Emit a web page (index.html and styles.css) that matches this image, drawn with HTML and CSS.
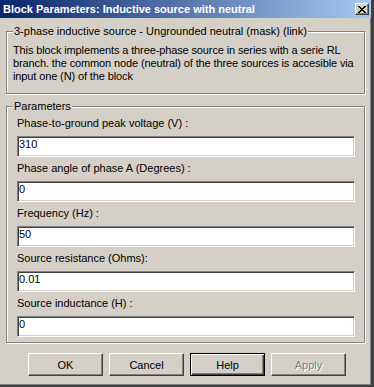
FILE: index.html
```html
<!DOCTYPE html>
<html lang="en">
<head>
    <meta charset="UTF-8">
    <title>Block Parameters: Inductive source with neutral</title>
    <link rel="stylesheet" href="styles.css">
</head>
<body>

<div class="window">
    <div class="titlebar">
        <span class="title">Block Parameters: Inductive source with neutral</span>
        <span class="close-btn">
            <svg width="8" height="7" viewBox="0 0 8 7">
                <path d="M0 0h2v1h1v1h2v-1h1v-1h2v1h-1v1h-1v1h-1v1h1v1h1v1h1v1h-2v-1h-1v-1h-2v1h-1v1h-2v-1h1v-1h1v-1h1v-1h-1v-1h-1v-1h-1z" fill="#000"/>
            </svg>
        </span>
    </div>

    <div class="client">
        <fieldset class="group desc">
            <legend>3-phase inductive source - Ungrounded neutral (mask) (link)</legend>
            <p class="desc-text">This block implements a three-phase source in series with a serie RL
branch. the common node (neutral) of the three sources is accesible via
input one (N) of the block</p>
        </fieldset>

        <fieldset class="group params">
            <legend>Parameters</legend>
            <label for="p1">Phase-to-ground peak voltage (V) :</label>
            <input class="field" id="p1" type="text" value="310">
            <label for="p2">Phase angle of phase A (Degrees) :</label>
            <input class="field" id="p2" type="text" value="0">
            <label for="p3">Frequency (Hz) :</label>
            <input class="field" id="p3" type="text" value="50">
            <label for="p4">Source resistance (Ohms):</label>
            <input class="field" id="p4" type="text" value="0.01">
            <label for="p5">Source inductance (H) :</label>
            <input class="field last" id="p5" type="text" value="0">
        </fieldset>

        <div class="buttons">
            <button class="btn">OK</button>
            <button class="btn">Cancel</button>
            <button class="btn default">Help</button>
            <button class="btn" disabled>Apply</button>
        </div>
    </div>
</div>

</body>
</html>
```

FILE: styles.css
```css
body {
    margin: 0;
    background-color: #d4d0c8;
    font-family: "Liberation Sans", Arial, sans-serif;
    font-size: 11px;
    color: #000;
}
.window {
    width: 374px;
    height: 387px;
    box-sizing: border-box;
    border-right: 3px solid #404040;
    border-bottom: 2px solid #404040;
    box-shadow: inset -1px -1px 0 #808080;
    display: flex;
    flex-direction: column;
}
.titlebar {
    height: 18px;
    display: flex;
    align-items: center;
    justify-content: space-between;
    padding: 0 2px 0 3px;
    background: linear-gradient(to right, #0a246a, #a6caf0);
}
.title {
    color: #fff;
    font-weight: bold;
    font-size: 11px;
}
.close-btn {
    width: 14px;
    height: 12px;
    box-sizing: border-box;
    display: flex;
    align-items: center;
    justify-content: center;
    background-color: #d4d0c8;
    border: 1px solid;
    border-color: #fff #404040 #404040 #fff;
    box-shadow: inset -1px -1px 0 #808080;
}
.client {
    padding: 7px 6px 0 6px;
}
.group {
    min-width: 0;
    margin: 0;
    padding: 6px 1px 10px 6px;
    border: 1px solid #808080;
    box-shadow: 1px 1px 0 #fff, inset 1px 1px 0 #fff;
}
.group legend {
    padding: 0 1px;
    line-height: 13px;
    background-color: #d4d0c8;
}
.desc-text {
    margin: 0;
    line-height: 13px;
    letter-spacing: -0.12px;
    white-space: pre;
}
.params {
    margin-top: 6px;
    padding: 4px 6px 5px 6px;
}
.params label {
    display: block;
    margin-left: 4px;
    line-height: 13px;
    margin-bottom: 6px;
}
.field {
    display: block;
    box-sizing: border-box;
    width: 338px;
    height: 21px;
    margin: 0 0 5px 4px;
    padding: 0 1px 6px 1px;
    border: 1px solid;
    border-color: #808080 #fff #fff #808080;
    box-shadow: inset 1px 1px 0 #404040, inset -1px -1px 0 #d4d0c8;
    background-color: #fff;
    font: inherit;
    color: #000;
    outline: none;
}
.field.last {
    margin-bottom: 0;
}
.buttons {
    display: flex;
    gap: 6px;
    margin-top: 10px;
    padding-left: 22px;
}
.btn {
    width: 75px;
    height: 23px;
    box-sizing: border-box;
    padding: 0;
    background-color: #d4d0c8;
    border: 1px solid;
    border-color: #fff #404040 #404040 #fff;
    box-shadow: inset -1px -1px 0 #808080;
    font: inherit;
    color: #000;
}
.btn.default {
    border-color: #000;
    box-shadow: inset 1px 1px 0 #fff, inset -1px -1px 0 #404040, inset -2px -2px 0 #808080;
}
.btn:disabled {
    color: #808080;
    text-shadow: 1px 1px 0 #fff;
}
```
